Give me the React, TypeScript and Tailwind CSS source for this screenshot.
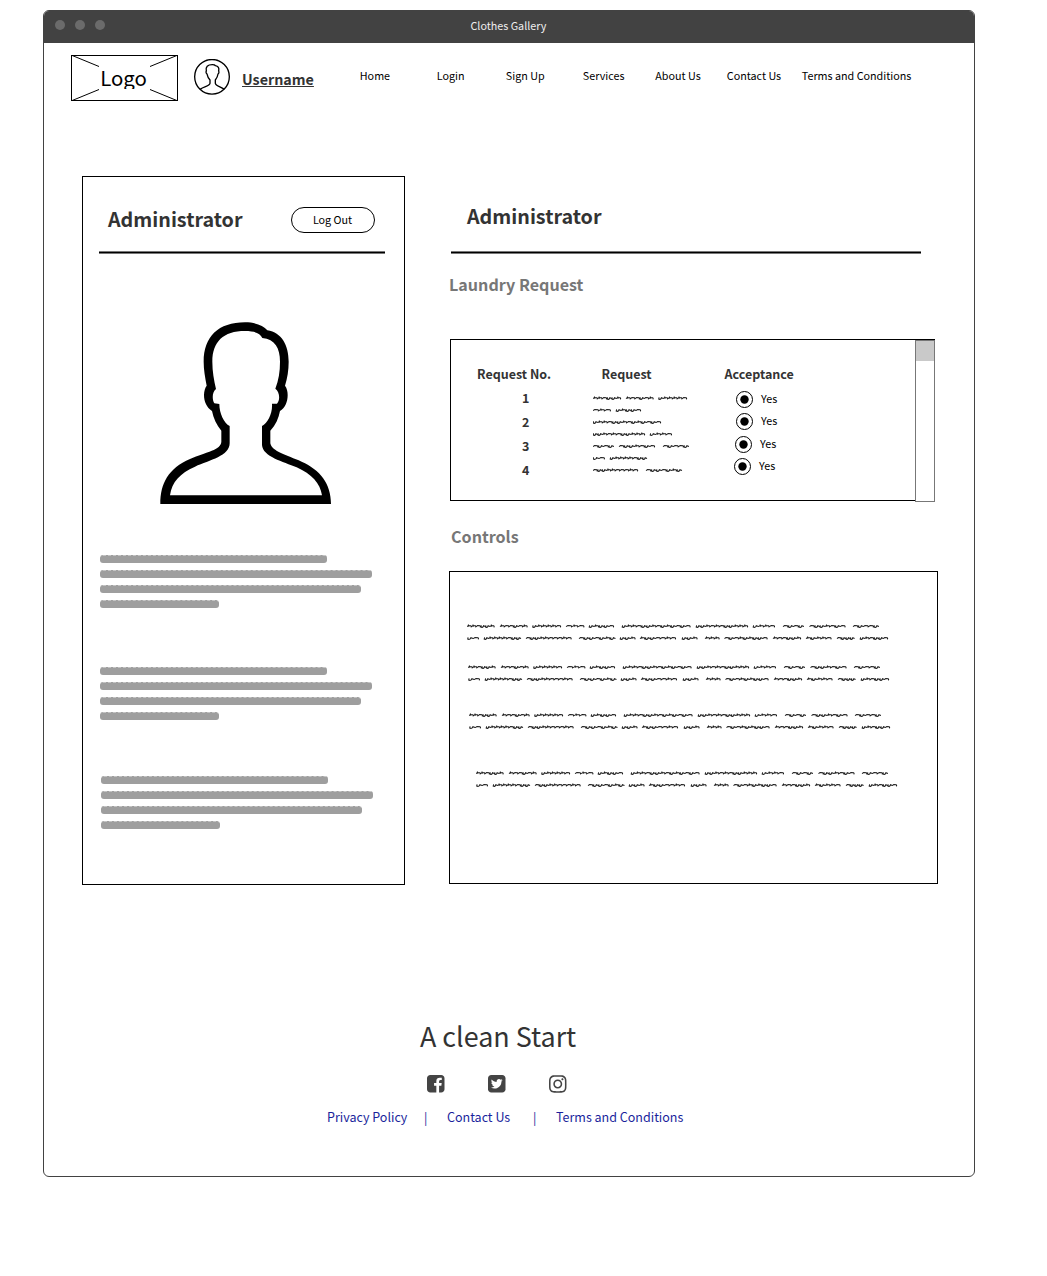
import React from "react";
import { FaInstagram } from "react-icons/fa";

type Word = [number, number, string];

// Each word is [start, end, stroke pattern]; "a" is a crest, "u" a low hook, "x" a crossed crest.
const FIRST_LINE: Word[] = [
  [0, 27.5, "xxauux"], [33, 60.5, "xaauax"], [65.5, 94, "uxxxxa"], [99, 117.5, "axa"],
  [122, 147, "uxuua"], [155, 223.5, "uxxauuxauxuaua"], [229, 281, "uuxaxauuxxx"],
  [286, 308, "uxxa"], [316, 337, "auau"], [342.5, 378.5, "auuxaua"], [386, 412, "auaau"],
];
const SECOND_LINE: Word[] = [
  [0.5, 12, "ua"], [17, 54, "uxxxxauu"], [59, 104.5, "auuxxaaaxa"], [112, 148.5, "auuauxu"],
  [153, 168.5, "uux"], [173, 209, "xuuaaxa"], [215, 230.5, "uux"], [238, 252.5, "xxx"],
  [257.5, 300.5, "auaxuxuua"], [306, 334, "xaauux"], [339, 364.5, "xuxxa"], [370, 387.5, "auuu"],
  [393, 421, "uxauua"],
];
const REQUEST_LINES: Word[][] = [
  [[0, 28, "xxauux"], [33, 60.5, "xaauax"], [65.5, 94, "uxxxxa"]],
  [[0, 18, "axa"], [23, 48, "uxuua"]],
  [[0, 68, "uxxauuxauxuaua"]],
  [[0, 52, "uuxaxauuxxx"], [57, 79, "uxxa"]],
  [[0, 21, "auau"], [26, 62, "auuxaua"], [70, 96, "auaau"]],
  [[0, 12, "ua"], [17, 54, "uxxxxauu"]],
  [[0, 45, "auuxxaaaxa"], [53, 89, "auuauxu"]],
];

function wordPath([start, end, pattern]: Word, y: number) {
  const w = (end - start) / pattern.length;
  return pattern
    .split("")
    .map((c, i) => {
      const x = start + i * w;
      if (c === "u")
        return `M${x + 0.6} ${y - 1}l-.4 1.8q${w * 0.3} .7 ${w * 0.5} -.4l.3 -1l${w * 0.4} .7`;
      const crest = `M${x} ${y + 0.3}l${w * 0.3} -1l${w * 0.55} .2q.6 .5 .1 1.6`;
      return c === "x" ? `${crest}M${x + w * 0.3} ${y - 1.8}l.5 2.2` : crest;
    })
    .join("");
}

function Scribble({ lines, className }: { lines: Word[][]; className: string }) {
  return (
    <svg className={className} fill="none" stroke="#1c1c1c" strokeWidth="1.05">
      {lines.map((line, i) => (
        <path key={i} d={line.map((w) => wordPath(w, 6.3 + i * 12)).join("")} />
      ))}
    </svg>
  );
}

function TextBars({ className }: { className: string }) {
  const bars = ["w-[226px]", "w-[271px]", "w-[260px]", "w-[118px]"];
  return (
    <div className={`flex flex-col gap-[7px] ${className}`}>
      {bars.map((w) => (
        <div key={w} className={`box-content h-[7px] rounded-[3px] border-t border-dashed border-[#c4c4c4] bg-[#9e9e9e] pr-[0.500px] ${w}`} />
      ))}
    </div>
  );
}

function Rule({ className }: { className: string }) {
  return <div className={`h-[3px] border-y border-[#777] bg-black ${className}`} />;
}

function Logo() {
  return (
    <div className="relative ml-[27px] mt-3 h-[46px] w-[107px] shrink-0 border border-black">
      <svg className="absolute -left-px -top-px h-[46px] w-[107px]" stroke="#000" strokeWidth="1">
        <path d="M0 0L28 11.5M79 11.5L107 0M0 46L28 34.5M79 34.5L107 46" />
      </svg>
      <div className="mt-[9px] h-[24px] overflow-hidden pr-0.5 text-center text-[20.4px] leading-[24px]">Logo</div>
    </div>
  );
}

const NAV = [
  ["Home", "w-[77px]"], ["Login", "w-[69px]"], ["Sign Up", "w-[77px]"], ["Services", "w-[72.5px]"],
  ["About Us", "w-[71.5px]"], ["Contact Us", "w-[75px]"], ["Terms and Conditions", "w-[115px]"],
];

function Header() {
  return (
    <header className="flex h-[133px] items-start">
      <Logo />
      <svg className="ml-4 mt-4 h-9 w-9 shrink-0" viewBox="461 161 108 108" fill="none" stroke="#000" strokeWidth="4">
        <circle cx="515" cy="214.500" r="52" />
        <path d="M479 252C493 243 509 242 509 234V224C502 217 501 211 500 206C496 203 497 198 498 197C495 184 502 178 516 178C520 178 524 179 525 181C534 182 537 188 535 197C537 201 535 205 533 206C532 214 529 219 525 224V234C525 242 541 243 552 252" />
      </svg>
      <div className="ml-3 mt-[26px] w-[117.8px] shrink-0 text-[14.3px] font-bold leading-5 text-[#333] underline decoration-1 underline-offset-1">
        Username
      </div>
      <nav className="mt-[23px] flex text-[10.75px] leading-5">
        {NAV.map(([label, w]) => (
          <a key={label} className={`shrink-0 ${w}`}>{label}</a>
        ))}
      </nav>
    </header>
  );
}

function ProfileCard() {
  return (
    <section className="ml-[38px] h-[709px] w-[323px] shrink-0 border border-black pl-4">
      <div className="flex h-[74px] items-start">
        <h1 className="ml-[9px] mt-7 w-[183px] text-[19.7px] font-bold leading-7 text-[#333]">Administrator</h1>
        <button className="mt-[30px] h-[26px] w-[84px] rounded-full border border-black pr-px text-[10.75px] leading-5">Log Out</button>
      </div>
      <Rule className="w-[286px]" />
      <svg className="ml-[51px] mt-14 h-[205px] w-[190px]" viewBox="0 0 570 615" fillRule="evenodd">
        <path d="M31 582C31 520 55 475 120 447C170 425 213 420 214 395V362C200 345 190 325 186 303C170 292 162 275 162 255C162 243 166 232 170 227C165 200 161 180 161 155C161 80 205 37 285 37C315 37 340 46 352 61C395 68 416 105 416 155C416 180 412 205 405 227C411 235 413 245 413 255C413 275 405 295 390 303C386 325 377 345 361 362V400C366 425 410 435 455 455C510 480 543 520 543 582ZM60 556C66 515 90 490 135 470C180 450 239 438 239 400V348C222 340 208 310 208 282L193 280C186 268 186 246 198 237C192 210 187 185 187 155C187 95 220 63 285 63C315 63 330 70 337 84C375 87 390 115 390 155C390 185 386 210 376 236C388 244 392 268 381 281H366C368 310 353 340 336 348V405C338 440 400 455 440 472C485 492 511 520 516 556Z" />
      </svg>
      <TextBars className="ml-px mt-10" />
      <TextBars className="ml-px mt-[59px]" />
      <TextBars className="ml-0.5 mt-14" />
    </section>
  );
}

function Radio({ className }: { className: string }) {
  return (
    <label className={`flex h-[17px] items-center ${className}`}>
      <svg className="h-[17px] w-[17px]" viewBox="0 0 17 17">
        <circle cx="8.500" cy="8.500" r="8" fill="none" stroke="#000" />
        <circle cx="8.500" cy="8.500" r="4.200" />
      </svg>
      <span className="-mt-0.5 ml-2 text-[10.75px] leading-[17px]">Yes</span>
    </label>
  );
}

function RequestTable() {
  return (
    <div className="ml-px mt-10 flex h-[163px] w-[485px]">
      <div className="flex h-[162px] w-[465px] border border-r-0 border-black pl-[26px] pt-6 text-[12.5px] font-bold text-[#333]">
        <div className="w-[124.5px]">
          <div className="leading-5">Request No.</div>
          <div className="ml-[45px] mt-0.5 leading-6">
            {[1, 2, 3, 4].map((n) => <div key={n}>{n}</div>)}
          </div>
        </div>
        <div className="w-[123px]">
          <div className="leading-5">Request</div>
          <Scribble lines={REQUEST_LINES} className="-ml-[8.5px] mt-2 h-[84px] w-[100px]" />
        </div>
        <div className="font-normal text-black">
          <div className="font-bold leading-5 text-[#333]">Acceptance</div>
          <Radio className="ml-[11.500px] mt-[7px]" />
          <Radio className="ml-[11.500px] mt-[5px]" />
          <Radio className="ml-[10.500px] mt-[6px]" />
          <Radio className="ml-[9.500px] mt-[5px]" />
        </div>
      </div>
      <div className="w-5 border-t border-black">
        <div className="h-[162px] border border-[#777]">
          <div className="h-5 bg-[#c9c9c9]" />
        </div>
      </div>
    </div>
  );
}

function MainPanel() {
  const block = [FIRST_LINE, SECOND_LINE];
  return (
    <section className="ml-11 w-[489px]">
      <h1 className="ml-[18px] mt-[26px] h-[49px] text-[19.7px] font-bold leading-7 text-[#333]">Administrator</h1>
      <Rule className="ml-0.5 w-[470px]" />
      <h2 className="mt-4 h-[29px] text-[16.1px] font-bold leading-7 text-[#777]">Laundry Request</h2>
      <RequestTable />
      <h2 className="ml-0.5 mt-5 h-[49px] text-[16.1px] font-bold leading-7 text-[#777]">Controls</h2>
      <div className="h-[313px] border border-black pl-[17px] pt-12">
        <Scribble lines={block} className="block h-6 w-[425px]" />
        <Scribble lines={block} className="ml-px mt-[17px] h-6 w-[425px]" />
        <Scribble lines={block} className="ml-0.5 mt-6 h-6 w-[425px]" />
        <Scribble lines={block} className="ml-[9px] mt-[34px] h-6 w-[425px]" />
      </div>
    </section>
  );
}

function Footer() {
  return (
    <footer className="mt-[129px]">
      <div className="ml-[376px] text-[26.9px] leading-[44px] text-[#333]">A clean Start</div>
      <div className="ml-[383px] mt-[17px] flex h-[18px] gap-[43.5px] text-[#444]">
        <svg className="h-[17.500px] w-[17.500px]" viewBox="0 128 1536 1536" fill="currentColor">
          <path d="M1248 128q119 0 203.500 84.500t84.500 203.500v960q0 119-84.500 203.500t-203.500 84.500h-188v-595h199l30-232h-229v-148q0-56 23.500-84t91.500-28l122-1v-207q-63-9-178-9-136 0-217.500 80t-81.500 226v171h-200v232h200v595h-532q-119 0-203.500-84.500t-84.500-203.500v-960q0-119 84.500-203.500t203.500-84.500h960z" />
        </svg>
        <svg className="h-[17.500px] w-[17.500px]" viewBox="0 128 1536 1536" fill="currentColor">
          <path d="M1536 416v960q0 119-84.500 203.500t-203.500 84.500h-960q-119 0-203.500-84.500t-84.500-203.500v-960q0-119 84.500-203.500t203.500-84.500h960q119 0 203.500 84.500t84.500 203.500z" />
          <path fill="#fff" transform="translate(0 100)" d="M1280 482q-56 25-121 34 68-40 93-117-65 38-134 51-61-66-153-66-87 0-148.500 61.500t-61.500 148.500q0 29 5 48-129-7-242-65t-192-155q-29 50-29 106 0 114 91 175-47-1-100-26v2q0 75 50 133.500t123 72.500q-29 8-51 8-13 0-39-4 21 63 74.500 104t121.500 42q-116 90-261 90-26 0-50-3 148 94 322 94 112 0 210-35.500t168-95 120.500-137 75-162 24.500-168.500q0-18-1-27 63-45 105-109z" />
        </svg>
        <FaInstagram className="-mt-px h-5 w-[17.500px]" />
      </div>
      <div className="ml-[283px] mt-3 flex text-[12.5px] leading-6 text-[#1a1f9c]">
        <a className="w-[97px]">Privacy Policy</a>
        <span className="w-[23px]">|</span>
        <a className="w-[86px]">Contact Us</a>
        <span className="w-[23px]">|</span>
        <a>Terms and Conditions</a>
      </div>
    </footer>
  );
}

export default function App() {
  return (
    <div className="h-[1276px] w-[1047px] overflow-hidden whitespace-nowrap bg-white pl-[43px] pt-2.5 font-['Noto_Sans_CJK_SC',sans-serif] text-black antialiased">
      <div className="h-[1167px] w-[932px] overflow-hidden rounded-md border border-[#424242] bg-white">
        <div className="flex h-8 items-start bg-[#424242]">
          <div className="ml-[10.500px] mt-[9px] flex w-[416px] gap-2.5">
            {[0, 1, 2].map((i) => <span key={i} className="h-2.5 w-2.5 rounded-full bg-[#6b6b6b]" />)}
          </div>
          <div className="mt-[5px] text-[10.75px] leading-5 text-[#eee]">Clothes Gallery</div>
        </div>
        <Header />
        <div className="flex items-start">
          <ProfileCard />
          <MainPanel />
        </div>
        <Footer />
      </div>
    </div>
  );
}
